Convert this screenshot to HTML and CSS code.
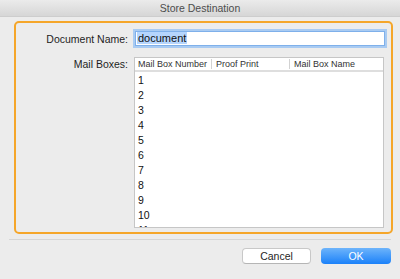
FILE: index.html
```html
<!DOCTYPE html>
<html>
<head>
<meta charset="utf-8">
<link rel="stylesheet" href="styles.css">
</head>
<body>
<div class="window">
  <div class="titlebar">Store Destination</div>
  <div class="panel">
    <div class="form">
      <div class="label label-mid">Document Name:</div>
      <div class="field"><span class="sel">document</span></div>
      <div class="label label-top">Mail Boxes:</div>
      <div class="table">
        <div class="thead">
          <div class="th c1">Mail Box Number</div>
          <div class="th c2">Proof Print</div>
          <div class="th c3">Mail Box Name</div>
        </div>
        <div class="tbody">
          <div class="row">1</div>
          <div class="row">2</div>
          <div class="row">3</div>
          <div class="row">4</div>
          <div class="row">5</div>
          <div class="row">6</div>
          <div class="row">7</div>
          <div class="row">8</div>
          <div class="row">9</div>
          <div class="row">10</div>
          <div class="row">11</div>
        </div>
      </div>
    </div>
  </div>
  <div class="sep"></div>
  <div class="buttons">
    <div class="btn cancel">Cancel</div>
    <div class="btn ok">OK</div>
  </div>
</div>
</body>
</html>
```
FILE: styles.css
```css
html, body {
  margin: 0;
  padding: 0;
}
body {
  width: 400px;
  height: 279px;
  background: #ececec;
  font-family: "Liberation Sans", Arial, sans-serif;
  font-size: 10.5px;
  color: #1e1e1e;
  overflow: hidden;
}
.window {
  width: 400px;
  height: 279px;
  display: flex;
  flex-direction: column;
}
.titlebar {
  height: 16px;
  line-height: 16px;
  border-bottom: 1px solid #cdcdcd;
  background: linear-gradient(#ebebeb, #d6d6d6);
  text-align: center;
  color: #4d4d4d;
  font-size: 10.5px;
}
.panel {
  margin: 4px 7px 0 14px;
  height: 209px;
  border: 2px solid #f5a62a;
  border-radius: 5px;
}
.form {
  display: grid;
  grid-template-columns: 112px 250px;
  column-gap: 6px;
  row-gap: 11px;
  padding-top: 8px;
}
.label {
  text-align: right;
  color: #1e1e1e;
}
.label-mid {
  align-self: center;
}
.label-top {
  align-self: start;
  line-height: 12px;
  padding-top: 1px;
}
.field {
  margin-left: 1px;
  width: 247px;
  height: 13px;
  background: #fff;
  border: 1px solid #7fb0ea;
  box-shadow: 0 0 0 2px #a9cbf2;
  font-size: 11px;
  line-height: 13px;
  padding-left: 1px;
}
.sel {
  background: #b5d5fd;
  padding: 0 1px;
  color: #111;
}
.table {
  height: 169px;
  border: 1px solid #c6c6c6;
  background: #fff;
  overflow: hidden;
}
.thead {
  height: 12px;
  display: flex;
  align-items: center;
  border-bottom: 2px solid #dedede;
  font-size: 9px;
  color: #333;
}
.th {
  padding-left: 4px;
  line-height: 10px;
}
.c1 {
  width: 73px;
  padding-left: 3px;
}
.c2, .c3 {
  border-left: 1px solid #d2d2d2;
}
.c2 {
  width: 73px;
}
.c3 {
  flex: 1;
}
.tbody {
  padding-top: 1px;
}
.row {
  height: 15px;
  line-height: 15px;
  padding-left: 3px;
  color: #111;
}
.sep {
  margin: 5px 9px 0 9px;
  border-top: 1px solid #d6d6d6;
}
.buttons {
  display: flex;
  justify-content: flex-end;
  gap: 10px;
  padding: 8px 9px 0 0;
}
.btn {
  height: 14px;
  line-height: 14px;
  text-align: center;
  border-radius: 4px;
  font-size: 10.5px;
}
.cancel {
  width: 67px;
  background: #fff;
  border: 1px solid #c8c8c8;
  border-bottom-color: #b5b5b5;
  color: #1e1e1e;
}
.ok {
  width: 70px;
  height: 16px;
  line-height: 16px;
  background: linear-gradient(#6db4fb, #1b81f9);
  color: #fff;
}
```
